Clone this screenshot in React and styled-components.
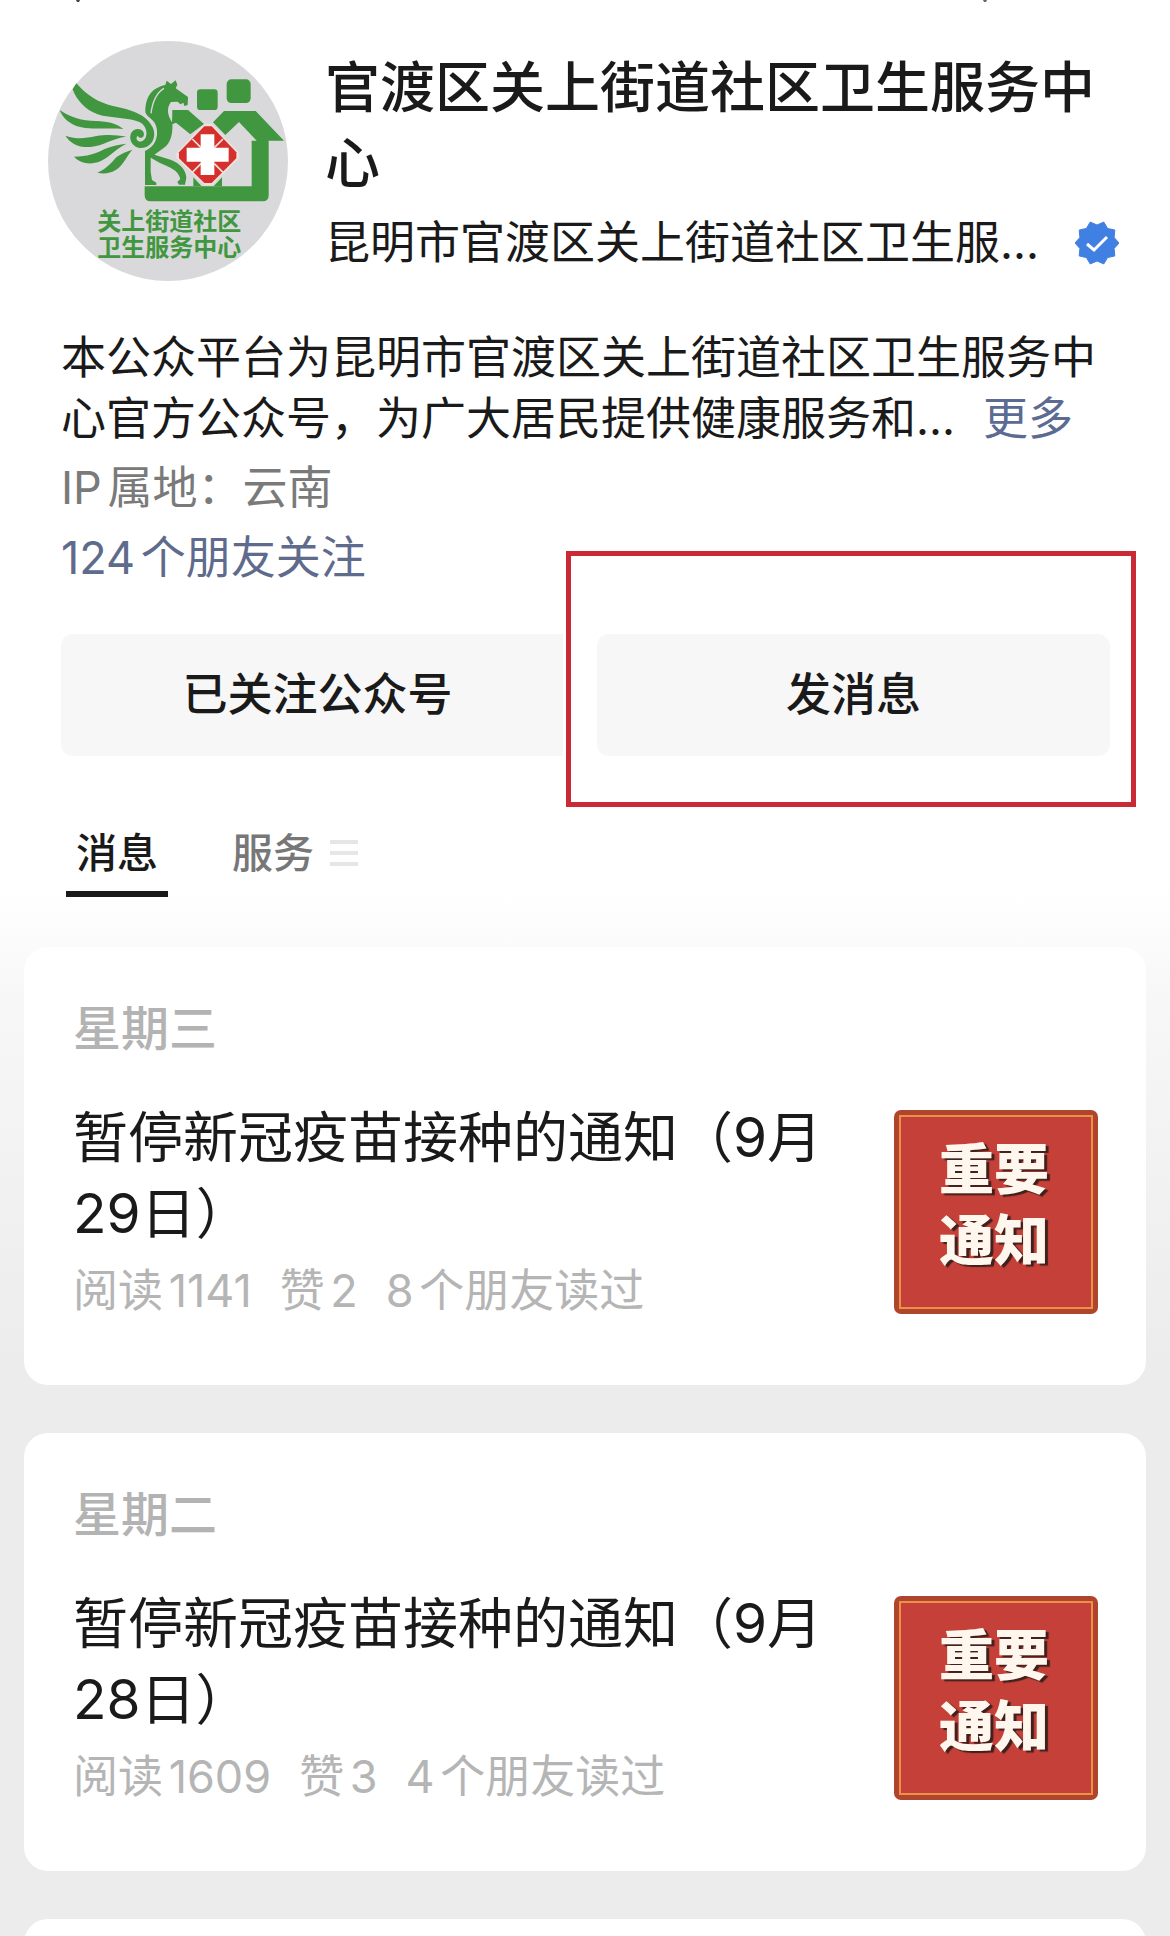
import React from "react";
import styled, { createGlobalStyle } from "styled-components";

const GlobalStyle = createGlobalStyle`
  * { box-sizing: border-box; }
  body {
    margin: 0;
    background: #ececec;
    color: #1a1a1a;
    font-family: Inter, "Noto Sans CJK SC", sans-serif;
    font-size: 45px;
    text-autospace: normal;
  }
  h1, h2, h3, p { margin: 0; font-weight: 400; }
  button, a { font: inherit; color: inherit; text-decoration: none; }
  button { border: 0; padding: 0; background: none; cursor: pointer; }
`;

const Page = styled.div`
  height: 100vh;
  overflow: hidden;
  background: linear-gradient(#fff 890px, #f7f7f7 1000px, #ececec 1360px);
`;

const TopBar = styled.div`
  display: flex;
  justify-content: space-between;
  height: 2px;
  padding: 0 183px 0 76px;
`;

const IconTip = styled.svg`
  width: 4px;
  height: 2px;
`;

const Profile = styled.header`
  display: flex;
  gap: 37px;
  padding: 39px 48px 0;
`;

const Avatar = styled.svg`
  flex: none;
  width: 240px;
  height: 240px;
  overflow: visible;
  font-family: "Noto Sans CJK SC", sans-serif;
  font-weight: 700;
`;

const Identity = styled.div`
  flex: 1;
  min-width: 0;
  padding-top: 8px;
`;

const Name = styled.h1`
  font-size: 55px;
  line-height: 76px;
  font-weight: 500;
`;

const Owner = styled.div`
  display: flex;
  align-items: center;
  gap: 36px;
  margin-top: 4px;
  line-height: 76px;
  white-space: nowrap;
`;

const Badge = styled.svg`
  flex: none;
  width: 44px;
  height: 44px;
`;

const About = styled.section`
  padding: 46px 61px 0;
`;

const Intro = styled.p`
  margin-bottom: 4px;
  line-height: 61px;
`;

const More = styled.a`
  && { color: #5b6b92; }
  margin-left: 28px;
`;

const Fact = styled.p`
  line-height: 70px;
  color: ${(p) => p.$color};
`;

const Actions = styled.div`
  display: grid;
  grid-template-columns: 1fr 1fr;
  gap: 23px;
  padding: 41px 60px 0 61px;
`;

const Action = styled.button`
  && {
    padding-bottom: 8px;
    font-weight: 500;
  }
  position: relative;
  width: 100%;
  height: 122px;
  border-radius: 12px;
  background: #f7f7f7;
`;

const Highlighted = styled.div`
  position: relative;
  &::before {
    content: "";
    position: absolute;
    inset: -83px -26px -51px -31px;
    border: 5px solid #c92a35;
    background: #fff;
    box-shadow: 0 0 0 3px #fff;
  }
`;

const Tabs = styled.nav`
  display: flex;
  gap: 54px;
  padding: 56px 66px 50px;
`;

const Tab = styled.button`
  && {
    display: flex;
    align-items: center;
    gap: 16px;
    height: 85px;
    padding: 0 10px 3px;
    font-size: 41px;
    font-weight: 500;
    color: ${(p) => (p.$active ? "#1a1a1a" : "#777")};
    border-bottom: 6px solid ${(p) => (p.$active ? "#1a1a1a" : "transparent")};
  }
`;

const MenuIcon = styled.svg`
  width: 28px;
  height: 28px;
  margin-top: 6px;
`;

const Feed = styled.main`
  display: flex;
  flex-direction: column;
  gap: 48px;
  padding: 0 24px;
`;

const Card = styled.article`
  min-height: 438px;
  padding: 52px 48px 63px 49px;
  border-radius: 24px;
  background: #fff;
`;

const Day = styled.h2`
  font-size: 48px;
  line-height: 60px;
  font-weight: 500;
  color: #b3b3b3;
`;

const Post = styled.a`
  display: flex;
  align-items: flex-start;
  gap: 40px;
  margin-top: 40px;
`;

const PostText = styled.div`
  flex: 1;
`;

const PostTitle = styled.h3`
  font-size: 55px;
  line-height: 76px;
  text-autospace: no-autospace;
`;

const Stats = styled.p`
  display: flex;
  gap: 28px;
  margin-top: 10px;
  font-size: 45px;
  line-height: 60px;
  color: #b5b5b5;
`;

const Thumb = styled.div`
  flex: none;
  width: 204px;
  height: 204px;
  margin-top: 11px;
  padding: 5px;
  border-radius: 7px;
  background: #b0452d;
`;

const ThumbFace = styled.div`
  height: 100%;
  padding: 17px 4px 0 0;
  border: 2px solid #ee9148;
  background: #c44038;
  color: #fff6ee;
  font-size: 55px;
  line-height: 71px;
  font-weight: 900;
  text-align: center;
  text-shadow: 3px 2px 1px #40201c;
`;

const GREEN = "#40973f";
const RED = "#d5302b";

function Logo() {
  return (
    <Avatar viewBox="55 62 720 720" role="img" aria-label="关上街道社区卫生服务中心">
      <circle cx="415" cy="422" r="360" fill="#d9d8da" />
      <g fill={GREEN}>
        <path d="M140 189C172 226 205 246 250 257C305 268 350 282 369 321C385 357 358 389 326 382C300 376 294 342 312 330C329 320 347 332 342 347C337 356 326 353 325 346C315 352 323 367 337 363C358 354 354 318 331 306C301 291 242 295 204 282C166 269 139 236 129 207Z" />
        <path d="M90 269C125 292 156 301 199 302C235 303 262 310 281 326C235 321 196 329 155 321C121 314 98 292 90 269Z" />
        <path d="M107 346C145 358 165 354 200 347C235 341 262 344 290 349C246 354 222 376 182 380C146 382 123 370 107 346Z" />
        <path d="M133 409C174 409 197 400 225 386C248 376 270 373 290 370C255 387 244 407 212 423C181 435 152 429 133 409Z" />
        <path d="M203 457C233 445 245 426 261 410C276 399 290 394 308 388C291 407 283 433 257 450C240 460 220 461 203 457Z" />
        <path d="M347 276C347 226 368 203 407 194L411 181L424 191L438 180L443 193L438 204L475 230L474 254L464 257L461 247L452 252L444 244L424 245C409 264 414 287 428 307C430 338 424 369 401 384L374 403L425 419C450 430 468 446 470 472L466 493H448L443 485L452 476C446 449 419 441 391 428L363 412V455L367 479L380 487V494H346V392C377 379 386 350 381 324C377 297 353 293 347 276Z" />
        <path d="M428 269H475L523 311L482 342L439 307L427 312Z" />
        <path d="M550 306L583 272H678L763 361H717V525Q717 543 699 543H363Q345 543 345 525V498H666V361H681L628 305L587 344Z" />
        <path d="M491 471L516 498H491ZM577 471V498H552Z" />
        <rect x="502" y="207" width="62" height="62" rx="10" />
        <rect x="591" y="177" width="72" height="71" rx="14" />
      </g>
      <path d="M364 279C369 240 381 217 403 204" fill="none" stroke="#d9d8da" strokeWidth="4" />
      <path d="M525 310H545L629 397V414L546 495H525L440 414V397Z" fill="#eee2df" />
      <path d="M524 318H546L620 396V414L546 488H524L448 414V396Z" fill={RED} />
      <path d="M488 356L514 382M580 356L554 382M488 456L514 430M580 456L554 430" stroke="#eee2df" strokeWidth="5" />
      <path d="M513 342H554V382H597V424H554V464H513V424H471V382H513Z" fill="#fff" />
      <g fill={GREEN} fontSize="72" textAnchor="middle">
        <text x="419" y="630">关上街道社区</text>
        <text x="419" y="707">卫生服务中心</text>
      </g>
    </Avatar>
  );
}

function badgePath() {
  const points = [];
  for (let i = 0; i < 20; i += 1) {
    const r = i % 2 ? 22 : 18;
    const a = (Math.PI * i) / 10;
    points.push(`${22 + r * Math.sin(a)},${22 - r * Math.cos(a)}`);
  }
  return points.join(" ");
}

function Verified() {
  return (
    <Badge viewBox="0 0 44 44" role="img" aria-label="已认证">
      <polygon points={badgePath()} fill="#3f80e2" stroke="#3f80e2" strokeWidth="1" strokeLinejoin="round" />
      <path d="M12 23L19 29L32 16" fill="none" stroke="#fff" strokeWidth="3" />
    </Badge>
  );
}

const posts = [
  { day: "星期三", title: "暂停新冠疫苗接种的通知（9月29日）", stats: ["阅读1141", "赞2", "8个朋友读过"] },
  { day: "星期二", title: "暂停新冠疫苗接种的通知（9月28日）", stats: ["阅读1609", "赞3", "4个朋友读过"] },
];

export default function App() {
  return (
    <Page>
      <GlobalStyle />
      <TopBar aria-hidden="true">
        <IconTip viewBox="0 0 4 2">
          <path d="M0 0H4L3 2H1Z" fill="#444" />
        </IconTip>
        <IconTip viewBox="0 0 4 2">
          <path d="M0 0H4L3 2H1Z" fill="#666" />
        </IconTip>
      </TopBar>
      <Profile>
        <Logo />
        <Identity>
          <Name>官渡区关上街道社区卫生服务中心</Name>
          <Owner>
            <span>昆明市官渡区关上街道社区卫生服...</span>
            <Verified />
          </Owner>
        </Identity>
      </Profile>
      <About>
        <Intro>
          本公众平台为昆明市官渡区关上街道社区卫生服务中心官方公众号，为广大居民提供健康服务和...
          <More href="#more">更多</More>
        </Intro>
        <Fact $color="#7a7a7a">IP属地：云南</Fact>
        <Fact $color="#5f6b8c">124个朋友关注</Fact>
      </About>
      <Actions>
        <Action>已关注公众号</Action>
        <Highlighted>
          <Action>发消息</Action>
        </Highlighted>
      </Actions>
      <Tabs>
        <Tab $active>消息</Tab>
        <Tab>
          服务
          <MenuIcon viewBox="0 0 28 28" aria-hidden="true">
            <path d="M0 3H28M0 14H28M0 25H28" stroke="#e6e6e6" strokeWidth="4" />
          </MenuIcon>
        </Tab>
      </Tabs>
      <Feed>
        {posts.map((post) => (
          <Card key={post.day}>
            <Day>{post.day}</Day>
            <Post href="#post">
              <PostText>
                <PostTitle>{post.title}</PostTitle>
                <Stats>
                  {post.stats.map((s) => (
                    <span key={s}>{s}</span>
                  ))}
                </Stats>
              </PostText>
              <Thumb>
                <ThumbFace>
                  重要
                  <br />
                  通知
                </ThumbFace>
              </Thumb>
            </Post>
          </Card>
        ))}
        <Card />
      </Feed>
    </Page>
  );
}
